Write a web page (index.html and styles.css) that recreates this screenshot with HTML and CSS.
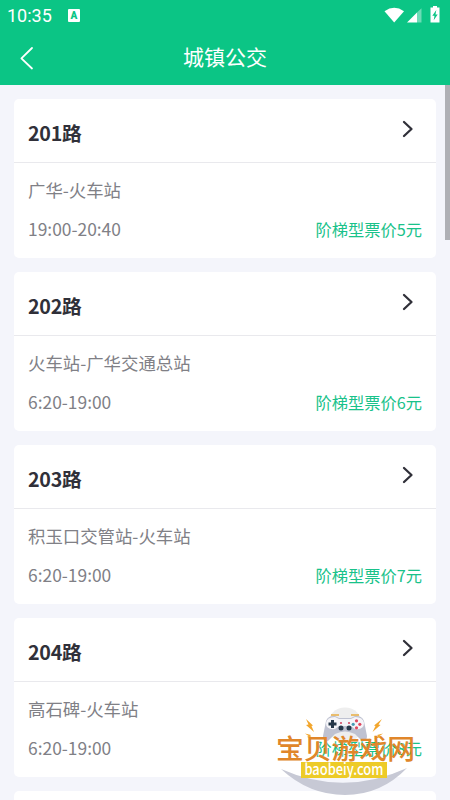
FILE: index.html
```html
<!DOCTYPE html>
<html lang="zh-CN">
<head>
<meta charset="utf-8">
<title>城镇公交</title>
<link rel="stylesheet" href="styles.css">
</head>
<body>
<header class="top">
  <div class="status">
    <span class="clock">10:35</span>
    <span class="input-badge">A</span>
    <svg class="signals" width="60" height="20" viewBox="0 0 60 20" fill="#fff">
      <path d="M.5 5.2Q10.200-1.500 20 5.200L10.200 16.600Z"/>
      <path d="M23 16.500L33 6.500V16.500Z"/><path d="M33 6.500L37.500 2.300V16.500H33Z" opacity=".4"/>
      <path d="M49 0h4v1.500h2.500V16.500h-9V1.500H49Z"/><path d="M52.300 4l-4 5.700h2.200l-.8 4.500 4-5.700h-2.200Z" fill="#0bc585"/>
    </svg>
  </div>
  <div class="navbar">
    <svg class="back" width="14" height="24" viewBox="0 0 14 24"><path d="M12 2L1.400 12.300L12 22.500"/></svg>
    <h1>城镇公交</h1>
  </div>
</header>
<main class="list">
  <section class="card">
    <div class="card-head"><h2>201路</h2><svg class="arrow" width="12" height="18" viewBox="0 0 12 18"><path d="M2 2L9.500 9L2 16"/></svg></div>
    <div class="card-body"><p>广华-火车站</p><div class="row"><span>19:00-20:40</span><span class="price">阶梯型票价5元</span></div></div>
  </section>
  <section class="card">
    <div class="card-head"><h2>202路</h2><svg class="arrow" width="12" height="18" viewBox="0 0 12 18"><path d="M2 2L9.500 9L2 16"/></svg></div>
    <div class="card-body"><p>火车站-广华交通总站</p><div class="row"><span>6:20-19:00</span><span class="price">阶梯型票价6元</span></div></div>
  </section>
  <section class="card">
    <div class="card-head"><h2>203路</h2><svg class="arrow" width="12" height="18" viewBox="0 0 12 18"><path d="M2 2L9.500 9L2 16"/></svg></div>
    <div class="card-body"><p>积玉口交管站-火车站</p><div class="row"><span>6:20-19:00</span><span class="price">阶梯型票价7元</span></div></div>
  </section>
  <section class="card">
    <div class="card-head"><h2>204路</h2><svg class="arrow" width="12" height="18" viewBox="0 0 12 18"><path d="M2 2L9.500 9L2 16"/></svg></div>
    <div class="card-body"><p>高石碑-火车站</p><div class="row"><span>6:20-19:00</span><span class="price">阶梯型票价8元</span></div></div>
  </section>
  <section class="card"></section>
</main>
<div class="scrollbar"></div>
<div class="watermark">
  <svg width="144" height="92" viewBox="0 0 144 92">
    <circle cx="70" cy="22" r="17.500" fill="#eee"/>
    <path d="M6 66Q69 94 132 65Q106 92 70 92Q34 92 6 66Z" fill="#c7c9d5"/>
    <path d="M56 12h8M76 12h8" stroke="#e9bd6e" stroke-width="1.800"/>
    <path d="M51 18Q53 12.500 60 13L64 15H76L80 13Q87 12.500 89 18L92 33Q92 39 87 38Q84 35 80 31Q75 28.500 70 28.500Q65 28.500 60 31Q56 35 53 38Q48 39 48 33Z" fill="#bfc2d1"/>
    <path d="M51 20Q52 14 60 14L64 16H76L80 14Q88 14 89 20Q89 27 80 26L76 23H64L60 26Q51 27 51 20Z" fill="#f5f5f9"/>
    <path d="M57.500 17v8M53.500 21h8" stroke="#26384a" stroke-width="3"/>
    <circle cx="66" cy="25" r="2.500" fill="#26384a"/><circle cx="74" cy="25" r="2.500" fill="#26384a"/>
    <circle cx="66" cy="20" r="1.100" fill="#d34c65"/><circle cx="74" cy="20" r="1.100" fill="#d34c65"/>
    <g fill="#df4960"><circle cx="81.500" cy="17.800" r="1.600"/><circle cx="81.500" cy="24.800" r="1.600"/><circle cx="84.800" cy="21.300" r="1.600"/></g>
    <circle cx="78.200" cy="21.300" r="1.600" fill="#469bb5"/>
    <path d="M31 16l7 6.500-1.500.5 2.500 6-8-7 2.500-.5ZM30 30.500l6 1.500-1 1 4 3-7-2 1.500-1ZM107 16l-8 6.500 1.500.5-3 6 8-7-2-.5ZM108 30.500l-6 1.500 1 1-4 3 7-2-1.500-1Z" fill="#f2a62d"/>
  </svg>
  <div class="brand">宝贝游戏网</div>
  <div class="domain"><span>baobeiy.com</span></div>
</div>
</body>
</html>
```
FILE: styles.css
```css
* { box-sizing: border-box; }
html { overflow: hidden; }
body { margin: 0; width: 450px; height: 800px; overflow: hidden; position: relative; background: #f4f5fb; font-family: "Noto Sans CJK SC", sans-serif; color: #303039; }
h1, h2, p { margin: 0; }
.top { height: 85px; background: #0bc585; color: #fff; }
.status { height: 31px; display: flex; align-items: center; padding: 1px 6px 0 7px; }
.clock { font: 400 18px/30px Roboto, sans-serif; width: 61px; }
.input-badge { width: 12px; height: 13px; margin-top: -2px; border-radius: 1px; background: #fff; color: #0bc585; font: 900 10px/13px Roboto, sans-serif; text-align: center; }
.signals { margin-left: auto; }
.navbar { height: 54px; display: grid; grid-template-columns: 60px 1fr 60px; align-items: center; }
.back { margin-left: 20px; }
.back path { fill: none; stroke: #fff; stroke-width: 1.800; stroke-linecap: round; stroke-linejoin: round; }
h1 { margin-top: -4px; text-align: center; font-size: 21px; line-height: 30px; font-weight: 400; }
.list { height: 715px; overflow: hidden; padding: 14px 14px 0; display: flex; flex-direction: column; gap: 14px; }
.card { height: 159px; flex: none; background: #fff; border-radius: 5px; }
.card:last-child { height: 9px; border-radius: 5px 5px 0 0; }
.card-head { height: 64px; border-bottom: 1px solid #e9e9ed; display: flex; justify-content: space-between; align-items: center; padding: 4px 22px 0 14px; }
h2 { font-size: 19.700px; line-height: 28px; font-weight: 700; letter-spacing: -.3px; }
.arrow { margin-top: -7px; }
.arrow path { fill: none; stroke: #303039; stroke-width: 2.300; stroke-linecap: round; stroke-linejoin: round; }
.card-body { padding: 14px 14px 0; color: #808086; font-size: 17.400px; line-height: 26px; }
.row { margin-top: 13px; display: flex; justify-content: space-between; }
.price { color: #19c28a; font-size: 16.250px; }
.scrollbar { position: absolute; right: 0; top: 85px; width: 5px; height: 155px; background: #afb0b5; }
.watermark { position: absolute; left: 275px; top: 703px; width: 144px; height: 92px; }
.watermark svg { position: absolute; left: 0; top: 0; }
.brand { position: absolute; left: 1px; top: 24px; font-size: 27.800px; line-height: 40px; font-weight: 500; color: #e0862a; white-space: nowrap; }
.domain { position: absolute; left: 26px; top: 59px; width: 86px; height: 16px; background: #edcb27; color: #fff; display: flex; justify-content: center; font-size: 15px; line-height: 14px; font-weight: 500; white-space: nowrap; }
.domain span { flex: none; transform: scaleX(.86); }
```
